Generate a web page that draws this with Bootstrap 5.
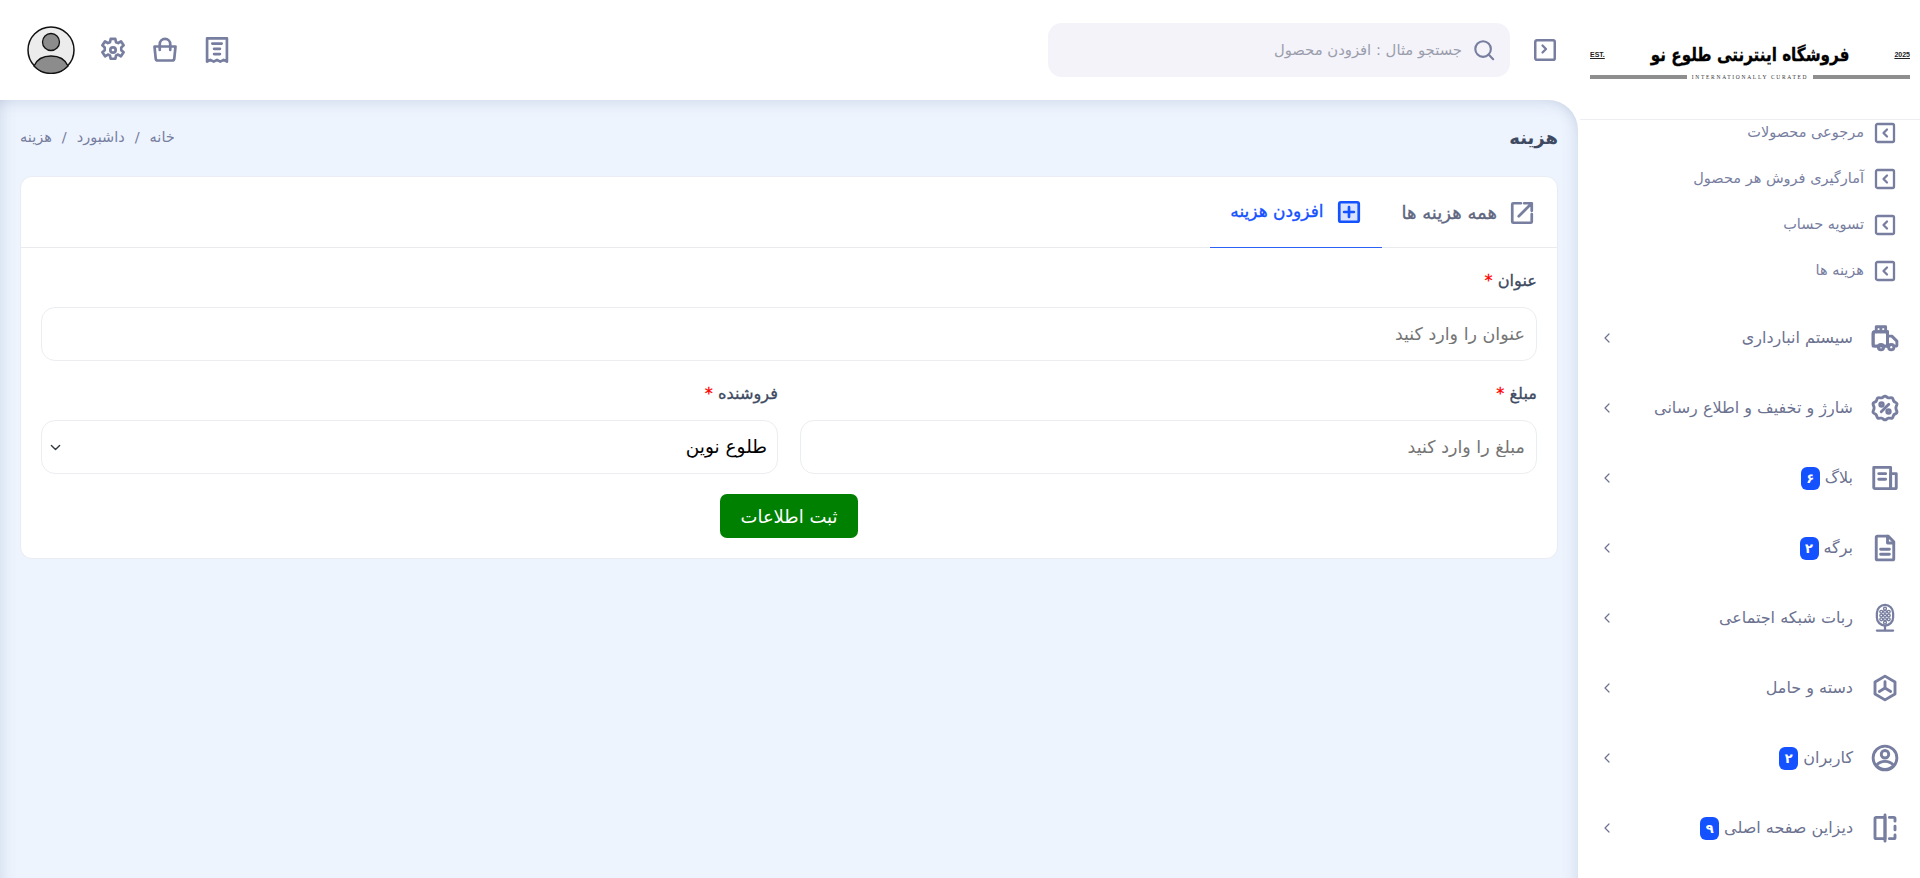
<!DOCTYPE html>
<html lang="fa" dir="rtl">
  <head>
    <title>هزینه</title>
    <meta charset="utf-8" />
    <meta name="viewport" content="width=device-width, initial-scale=1" />
    <link href="https://cdn.jsdelivr.net/npm/bootstrap@5.3.2/dist/css/bootstrap.min.css" rel="stylesheet" />
    <script src="https://cdn.jsdelivr.net/npm/bootstrap@5.3.2/dist/js/bootstrap.bundle.min.js"></script>
    <style>
      body { font-family: "DejaVu Sans", "Noto Sans", sans-serif; height: 878px; overflow: hidden; background: #fff; }
      .ico { fill: none; stroke: #777e9f; stroke-width: 2.3; stroke-linecap: round; stroke-linejoin: round; flex-shrink: 0; }
      .ico .tint { fill: #e4e6ef; }
      .ico .solid { fill: #777e9f; stroke: none; }
      .ico.chev { stroke: #6c7290; stroke-width: 1.2; }

      /* sidebar */
      .side { width: 342px; flex-shrink: 0; }
      .side-logo { height: 120px; padding: 40px 10px 0; border-bottom: 1px solid #eceef2; margin-left: 2px; }
      .logo-top { height: 30px; direction: ltr; }
      .logo-mini { font-size: 7px; font-weight: 700; color: #222; text-decoration: underline; font-family: "Liberation Sans", sans-serif; }
      .logo-title { font-size: 18.500px; font-weight: 700; color: #000; line-height: 30px; direction: rtl; transform: scaleX(.82); -webkit-text-stroke: .3px; }
      .logo-line { direction: ltr; margin-top: 4px; gap: 5px; }
      .logo-line i { flex: 1; height: 4px; background: #8e8e8e; }
      .logo-sub { font-family: "Liberation Serif", serif; font-size: 5.500px; letter-spacing: 1.700px; color: #333; line-height: 6px; }
      .sub-menu { gap: 22px; padding-right: 23px; margin-top: 1px; }
      .sub-item { height: 24px; gap: 9px; font-size: 14.500px; color: #777e9f; }
      .main-menu { gap: 40px; margin-top: 40px; padding: 0 20px 0 24px; }
      .main-item { height: 30px; font-size: 16px; color: #6c7290; }
      .main-item .lbl { gap: 5px; margin-right: 17px; }
      .count { background: #1552ff; border-radius: 6px; min-width: 19px; height: 23px; padding: 0 4px; font-size: 13px; line-height: 23px; font-weight: 700; }

      /* header */
      .top-bar { height: 100px; padding: 0 20px 0 27px; }
      .search-box { width: 462px; height: 54px; background: #f3f3f9; border-radius: 14px; padding: 0 15px; gap: 11px; margin-right: 22px; font-size: 14.800px; color: #9a9dac; }
      .top-icons { gap: 24px; }
      .avatar { width: 48px; height: 48px; }

      /* content */
      .content { background: #edf4fe; border-top-right-radius: 30px; padding: 0 20px; box-shadow: inset 16px 0 16px -16px rgba(90, 110, 150, .22), inset -16px 0 16px -16px rgba(90, 110, 150, .22), inset 0 16px 16px -16px rgba(90, 110, 150, .25); }
      .page-head { height: 76px; }
      .page-title { font-size: 18px; font-weight: 700; color: #3e4a62; margin: 0; }
      .breadcrumb { margin: 0; font-size: 14.500px; }
      .breadcrumb-item, .breadcrumb-item a { color: #777e9f; text-decoration: none; }
      .breadcrumb-item + .breadcrumb-item { padding-left: 0; padding-right: 10px; }
      .breadcrumb-item + .breadcrumb-item::before { float: right; padding-right: 0; padding-left: 10px; color: #777e9f; }
      .breadcrumb-item.active { color: #777e9f; }
      .form-card { border: 1px solid #e9edf3; border-radius: 12px; }
      .tab-bar { height: 71px; padding-right: 2px; border-bottom: 1px solid #e9ebef; }
      .tab-bar .nav-link { height: 71px; border: 0; border-radius: 0; margin: 0 0 -1px; padding: 0 20px; gap: 12px; color: #5f667f; font-size: 18px; -webkit-text-stroke: .35px; }
      .tab-bar .nav-link.active { color: #1552ff; font-size: 17px; border-bottom: 1px solid #2b62f5; }
      .form-body { padding: 21px 20px 20px; }
      .field-label { font-size: 16.200px; -webkit-text-stroke: .3px; color: #3e4a62; line-height: 24px; margin-bottom: 14px; }
      .star { color: #f00; }
      .form-row { --bs-gutter-x: 22px; margin-top: 21px; }
      .form-control, .form-select { height: 54px; border: 1px solid #ebedf0; border-radius: 14px; font-size: 17.500px; padding: 0 11px; }
      .form-control::placeholder { color: #757575; }
      .form-select { color: #000; font-size: 18.500px; padding: 0 10px 0 30px; background-position: left 6.500px center; background-size: 13px 11px; }
      .save-btn { background: #008000; border: 0; width: 138px; height: 44px; margin-top: 20px; font-size: 18px; border-radius: 7px; padding: 0; }
    </style>
  </head>
  <body class="d-flex">
    <svg width="0" height="0" class="position-absolute">
      <symbol id="i-box" viewBox="0 0 24 24"><rect class="tint" x="3" y="3" width="18" height="18" rx="1.500" /></symbol>
      <symbol id="i-chev" viewBox="0 0 10 10"><path d="M7 1 3 5l4 4" /></symbol>
      <symbol id="i-truck" viewBox="0 0 24 24"><path class="tint" d="M2.500 8.500a1.500 1.500 0 0 1 1.500-1.500h10v11.500H2.500z" /><path d="M6.500 18.500H4A1.500 1.500 0 0 1 2.500 17V8.500A1.500 1.500 0 0 1 4 7h10v11.500h-3" /><path d="M14 10.500h3.500l4 4V17.500a1 1 0 0 1-1 1h-1" /><path d="M14 18.500h1" /><circle cx="8.800" cy="19.300" r="2.100" /><circle cx="17" cy="19.300" r="2.100" /><path d="M5 7V3h7.500v4M8.700 3v4" /></symbol>
      <symbol id="i-badge" viewBox="0 0 24 24"><path class="tint" d="M12 2.500c1 0 1.700 1.200 2.700 1.400s2.300-.5 3.100.1.700 2 1.400 2.700 2.200.9 2.400 1.900-.9 2-.9 3.400.9 2.300.9 3.400-1.700 1.200-2.400 1.900-.6 2.100-1.400 2.700-2.100-.1-3.100.1S13 21.500 12 21.500s-1.700-1.200-2.700-1.400-2.300.5-3.100-.1-.7-2-1.400-2.700-2.200-.9-2.400-1.900.9-2 .9-3.400-.9-2.300-.9-3.400 1.700-1.200 2.400-1.900.6-2.100 1.400-2.700 2.100.1 3.100-.1S11 2.500 12 2.500z" /><path d="M15 9l-6 6" /><circle class="solid" cx="9.200" cy="9.200" r="1.400" /><circle class="solid" cx="14.800" cy="14.800" r="1.400" /></symbol>
      <symbol id="i-news" viewBox="0 0 24 24"><path class="tint" d="M3 3.500h13.500v17H4a1 1 0 0 1-1-1z" /><path d="M16.500 8.500H21V19.500a1 1 0 0 1-1 1h-3.500M16.500 20.500V8.500M7 8.500h5.500M7 13h5.500" /></symbol>
      <symbol id="i-file" viewBox="0 0 24 24"><path class="tint" d="M14.500 2.500H6a1 1 0 0 0-1 1v17a1 1 0 0 0 1 1h12a1 1 0 0 0 1-1V7z" /><path d="M14 2.500V8h5M8.500 13h7M8.500 17h7" /></symbol>
      <symbol id="i-mic" viewBox="0 0 24 24"><rect class="tint" x="5.500" y="1.500" width="13" height="16.500" rx="6.500" stroke-width="1.800" /><path d="M12 18v4M5.500 22h13" stroke-width="1.800" /><g class="solid"><circle cx="9" cy="7" r=".55" /><circle cx="12" cy="7" r=".55" /><circle cx="15" cy="7" r=".55" /><circle cx="9" cy="10" r=".55" /><circle cx="12" cy="10" r=".55" /><circle cx="15" cy="10" r=".55" /><circle cx="9" cy="13" r=".55" /><circle cx="12" cy="13" r=".55" /><circle cx="15" cy="13" r=".55" /><circle cx="12" cy="4.500" r=".55" /><circle cx="12" cy="15.500" r=".55" /></g></symbol>
      <symbol id="i-hex" viewBox="0 0 24 24"><path class="tint" d="M12 2.500l8 4.700v9.600l-8 4.700-8-4.700V7.200z" /><path d="M12 7v5l-4.500 2.800M12 12l4.500 2.800" /></symbol>
      <symbol id="i-user" viewBox="0 0 24 24"><circle cx="12" cy="12" r="9.500" /><path class="tint" d="M5 18c1.800-2.300 4.200-3.300 7-3.300s5.200 1 7 3.300a9.500 9.500 0 0 1-14 0z" /><circle cx="12" cy="9" r="3" /></symbol>
      <symbol id="i-split" viewBox="0 0 24 24"><path class="tint" d="M12 3.500H5a1 1 0 0 0-1 1v15a1 1 0 0 0 1 1h7z" /><path d="M12 1.500v21M15.500 3.500H19a1 1 0 0 1 1 1v2M20 10.500v3M20 17.500v2a1 1 0 0 1-1 1h-3.500" /></symbol>
      <symbol id="i-gear" viewBox="0 0 24 24"><path class="tint" d="M10 2.500h4l.6 2.800 1.800.8 2.400-1.500 2.300 3.400-2 1.800v2.400l2 1.800-2.300 3.400-2.400-1.500-1.800.8-.6 2.800h-4l-.6-2.800-1.800-.8-2.400 1.500-2.300-3.400 2-1.800V9.800l-2-1.800 2.300-3.400 2.400 1.500 1.800-.8z" /><circle cx="12" cy="12" r="2.300" /></symbol>
      <symbol id="i-bag" viewBox="0 0 24 24"><path class="tint" d="M3 9h18l-1 10a2 2 0 0 1-2 2H6a2 2 0 0 1-2-2z" /><path d="M7.500 12V7a4.500 4.500 0 0 1 9 0v5" /></symbol>
      <symbol id="i-receipt" viewBox="0 0 24 24"><path class="tint" d="M3.500 2h17v20l-2.800-1.500-2.900 1.500-2.800-1.500-2.800 1.500-2.900-1.500L3.500 22z" /><path d="M8 6.500h8M9.500 11h5M9.500 15.500h5" /></symbol>
      <symbol id="i-search" viewBox="0 0 24 24"><circle class="tint" cx="11" cy="11" r="8.500" /><path d="M17 17l5 5" /></symbol>
      <symbol id="i-ext" viewBox="0 0 24 24"><path class="tint" d="M3 3h18v18H3z" stroke="none" /><path d="M11 3H4a1 1 0 0 0-1 1v16a1 1 0 0 0 1 1h16a1 1 0 0 0 1-1v-7M9 15 20.500 3.500M14 3h7v7" stroke-width="2.500" /></symbol>
      <symbol id="i-plus" viewBox="0 0 24 24"><rect x="3" y="3" width="18" height="18" rx="1.500" fill="#d9e3fe" stroke="#1552ff" stroke-width="2.500" /><path d="M12 7.500v9M7.500 12h9" stroke="#1552ff" stroke-width="2.500" /></symbol>
    </svg>

    <aside class="side d-flex flex-column bg-white">
      <div class="side-logo">
        <div class="logo-top d-flex justify-content-between align-items-center">
          <span class="logo-mini">EST.</span>
          <span class="logo-title">فروشگاه اینترنتی طلوع نو</span>
          <span class="logo-mini">2025</span>
        </div>
        <div class="logo-line d-flex align-items-center">
          <i></i><span class="logo-sub">INTERNATIONALLY CURATED</span><i></i>
        </div>
      </div>

      <div class="sub-menu d-flex flex-column">
        <div class="sub-item d-flex align-items-center"><svg class="ico" width="24" height="24"><use href="#i-box" /><path d="M14 8.500 10.500 12l3.500 3.500" /></svg>مرجوعی محصولات</div>
        <div class="sub-item d-flex align-items-center"><svg class="ico" width="24" height="24"><use href="#i-box" /><path d="M14 8.500 10.500 12l3.500 3.500" /></svg>آمارگیری فروش هر محصول</div>
        <div class="sub-item d-flex align-items-center"><svg class="ico" width="24" height="24"><use href="#i-box" /><path d="M14 8.500 10.500 12l3.500 3.500" /></svg>تسویه حساب</div>
        <div class="sub-item d-flex align-items-center"><svg class="ico" width="24" height="24"><use href="#i-box" /><path d="M14 8.500 10.500 12l3.500 3.500" /></svg>هزینه ها</div>
      </div>

      <div class="main-menu d-flex flex-column">
        <div class="main-item d-flex align-items-center"><svg class="ico" width="30" height="30"><use href="#i-truck" /></svg><span class="lbl d-flex align-items-center">سیستم انبارداری</span><svg class="ico chev me-auto" width="10" height="10"><use href="#i-chev" /></svg></div>
        <div class="main-item d-flex align-items-center"><svg class="ico" width="30" height="30"><use href="#i-badge" /></svg><span class="lbl d-flex align-items-center">شارژ و تخفیف و اطلاع رسانی</span><svg class="ico chev me-auto" width="10" height="10"><use href="#i-chev" /></svg></div>
        <div class="main-item d-flex align-items-center"><svg class="ico" width="30" height="30"><use href="#i-news" /></svg><span class="lbl d-flex align-items-center">بلاگ <span class="badge count">۶</span></span><svg class="ico chev me-auto" width="10" height="10"><use href="#i-chev" /></svg></div>
        <div class="main-item d-flex align-items-center"><svg class="ico" width="30" height="30"><use href="#i-file" /></svg><span class="lbl d-flex align-items-center">برگه <span class="badge count">۲</span></span><svg class="ico chev me-auto" width="10" height="10"><use href="#i-chev" /></svg></div>
        <div class="main-item d-flex align-items-center"><svg class="ico" width="30" height="30"><use href="#i-mic" /></svg><span class="lbl d-flex align-items-center">ربات شبکه اجتماعی</span><svg class="ico chev me-auto" width="10" height="10"><use href="#i-chev" /></svg></div>
        <div class="main-item d-flex align-items-center"><svg class="ico" width="30" height="30"><use href="#i-hex" /></svg><span class="lbl d-flex align-items-center">دسته و حامل</span><svg class="ico chev me-auto" width="10" height="10"><use href="#i-chev" /></svg></div>
        <div class="main-item d-flex align-items-center"><svg class="ico" width="30" height="30"><use href="#i-user" /></svg><span class="lbl d-flex align-items-center">کاربران <span class="badge count">۲</span></span><svg class="ico chev me-auto" width="10" height="10"><use href="#i-chev" /></svg></div>
        <div class="main-item d-flex align-items-center"><svg class="ico" width="30" height="30"><use href="#i-split" /></svg><span class="lbl d-flex align-items-center">دیزاین صفحه اصلی <span class="badge count">۹</span></span><svg class="ico chev me-auto" width="10" height="10"><use href="#i-chev" /></svg></div>
      </div>
    </aside>

    <div class="flex-grow-1 d-flex flex-column">
      <header class="top-bar d-flex align-items-center bg-white">
        <svg class="ico" width="26" height="26"><use href="#i-box" /><path d="M10.500 8.500 14 12l-3.500 3.500" /></svg>
        <div class="search-box d-flex align-items-center">
          <svg class="ico" width="22" height="22"><use href="#i-search" /></svg>
          <span>جستجو مثال : افزودن محصول</span>
        </div>
        <div class="top-icons d-flex align-items-center me-auto">
          <svg class="ico" width="28" height="28"><use href="#i-receipt" /></svg>
          <svg class="ico" width="28" height="28"><use href="#i-bag" /></svg>
          <svg class="ico" width="28" height="28"><use href="#i-gear" /></svg>
          <svg class="avatar" viewBox="0 0 48 48">
            <circle cx="24" cy="24" r="23" fill="#ececec" stroke="#111" stroke-width="1.500" />
            <circle cx="24" cy="16" r="8.500" fill="#8c8c8c" stroke="#111" stroke-width="1.300" />
            <path d="M7 40c3-7 10-10 17-10s14 3 17 10a23 23 0 0 1-34 0z" fill="#8c8c8c" stroke="#111" stroke-width="1.300" />
          </svg>
        </div>
      </header>

      <main class="content flex-grow-1">
        <div class="page-head d-flex justify-content-between align-items-center">
          <h1 class="page-title">هزینه</h1>
          <ol class="breadcrumb">
            <li class="breadcrumb-item"><a href="#">خانه</a></li>
            <li class="breadcrumb-item"><a href="#">داشبورد</a></li>
            <li class="breadcrumb-item active">هزینه</li>
          </ol>
        </div>

        <div class="card form-card">
          <ul class="nav nav-tabs tab-bar">
            <li class="nav-item"><a class="nav-link d-flex align-items-center" href="#"><svg class="ico" width="26" height="26"><use href="#i-ext" /></svg>همه هزینه ها</a></li>
            <li class="nav-item"><a class="nav-link active d-flex align-items-center" href="#"><svg class="ico" width="26" height="26"><use href="#i-plus" /></svg>افزودن هزینه</a></li>
          </ul>
          <div class="card-body form-body">
            <label class="form-label field-label d-block">عنوان <span class="star">*</span></label>
            <input type="text" class="form-control" placeholder="عنوان را وارد کنید" />
            <div class="row form-row">
              <div class="col-6">
                <label class="form-label field-label d-block">مبلغ <span class="star">*</span></label>
                <input type="text" class="form-control" placeholder="مبلغ را وارد کنید" />
              </div>
              <div class="col-6">
                <label class="form-label field-label d-block">فروشنده <span class="star">*</span></label>
                <select class="form-select"><option>طلوع نوین</option></select>
              </div>
            </div>
            <div class="text-center">
              <button type="button" class="btn btn-success save-btn">ثبت اطلاعات</button>
            </div>
          </div>
        </div>
      </main>
    </div>
  </body>
</html>
